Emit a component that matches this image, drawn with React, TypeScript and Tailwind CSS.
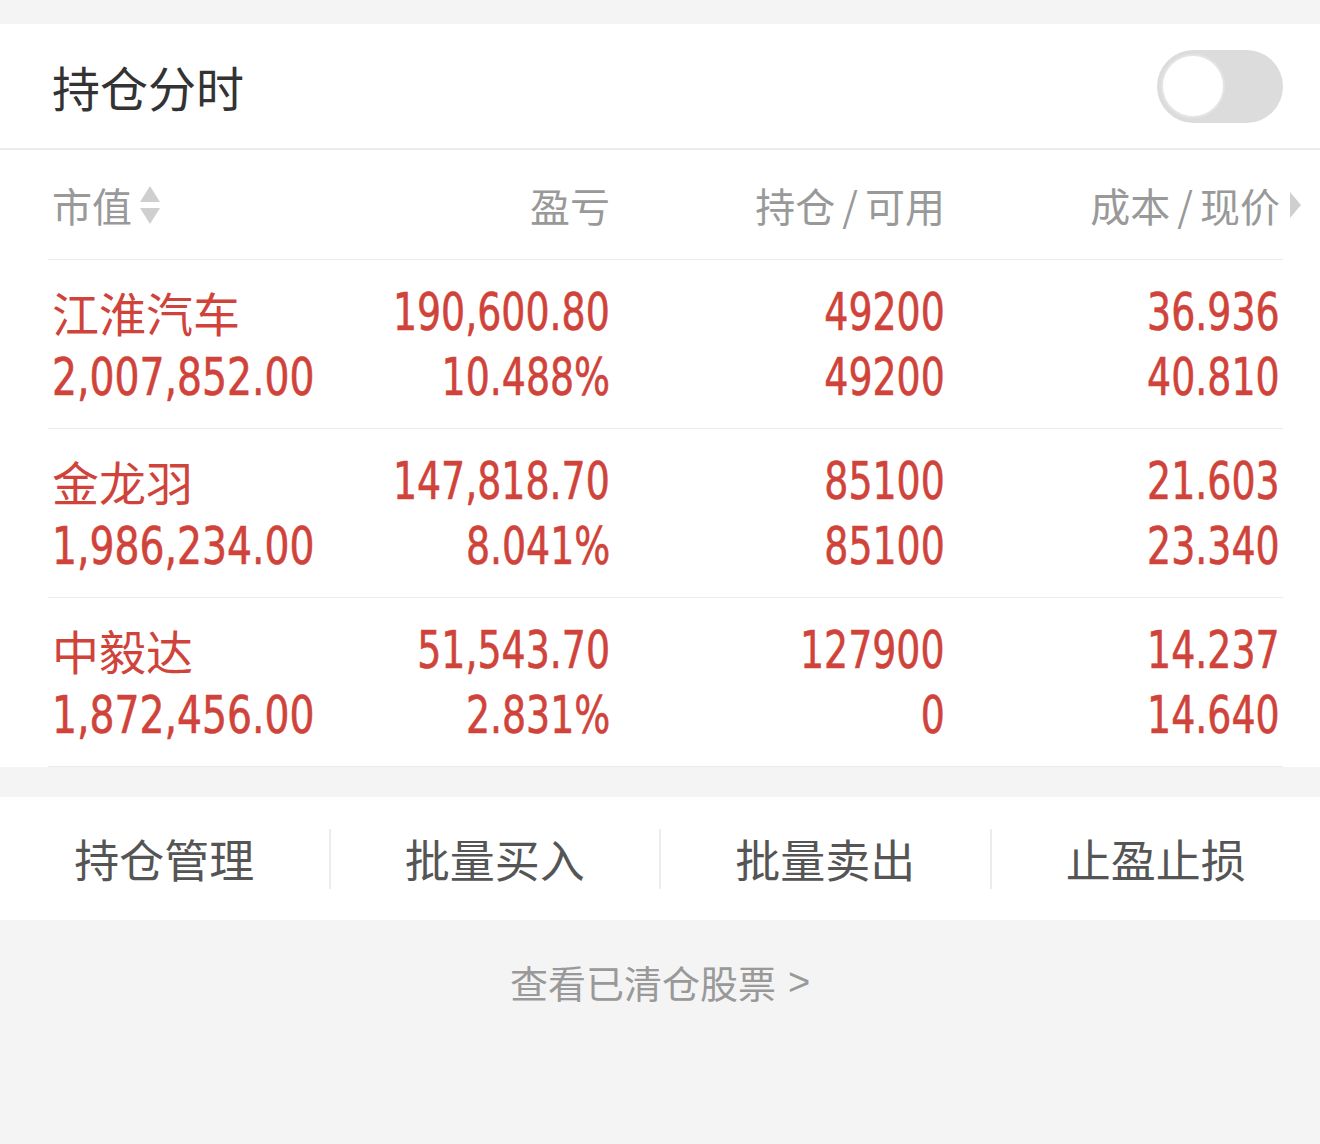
import React from 'react';

const cn = '"Noto Sans CJK SC", "Noto Sans", sans-serif';
const num = '"DejaVu Sans Condensed", "DejaVu Sans", sans-serif';

const rows = [
  { name: '江淮汽车', value: '2,007,852.00', pnl: '190,600.80', pct: '10.488%', hold: '49200', avail: '49200', cost: '36.936', price: '40.810' },
  { name: '金龙羽', value: '1,986,234.00', pnl: '147,818.70', pct: '8.041%', hold: '85100', avail: '85100', cost: '21.603', price: '23.340' },
  { name: '中毅达', value: '1,872,456.00', pnl: '51,543.70', pct: '2.831%', hold: '127900', avail: '0', cost: '14.237', price: '14.640' },
];

const actions = ['持仓管理', '批量买入', '批量卖出', '止盈止损'];

// condensed digits, like the DIN face in the app
function Num({ children, right, wide }: { children: React.ReactNode; right?: boolean; wide?: boolean }) {
  return (
    <span
      className={`inline-block whitespace-nowrap text-[52px] leading-none ${wide ? 'scale-x-[0.84]' : 'scale-x-[0.81]'} ${right ? 'origin-right' : 'origin-left'}`}
      style={{ fontFamily: num, WebkitTextStroke: '0.6px currentColor' }}
    >
      {children}
    </span>
  );
}

export default function App() {
  return (
    <div className="w-[1320px] h-[1144px] bg-[#f4f4f4] pt-[24px]" style={{ fontFamily: cn }}>
      {/* Header */}
      <div className="bg-white h-[126px] flex items-center justify-between pl-[52px] pr-[37px] border-b-2 border-[#ebebeb]">
        <span className="text-[48px] leading-none text-[#333]">持仓分时</span>
        <div className="w-[126px] h-[73px] rounded-full bg-[#dcdcdc] flex items-center pl-[4px]">
          <div className="w-[64px] h-[64px] rounded-full bg-white border-2 border-[#e4e4e4]" />
        </div>
      </div>

      {/* Table */}
      <div className="bg-white">
        <div className="ml-[48px] mr-[37px]">
          <div className="grid grid-cols-[223px_335px_335px_335px] items-center h-[110px] pl-[4px] pr-[3px] border-b border-[#ececec] text-[40px] text-[#999] leading-none">
            <div className="flex items-center gap-[6px]">
              <span>市值</span>
              <svg width="24" height="42" viewBox="0 0 24 42">
                <polygon points="12,2 22,18 2,18" fill="#cfcfcf" />
                <polygon points="2,24 22,24 12,40" fill="#cfcfcf" />
              </svg>
            </div>
            <div className="text-right">盈亏</div>
            <div className="text-right">持仓<span className="mx-[7px]">/</span>可用</div>
            <div className="relative text-right">
              成本<span className="mx-[7px]">/</span>现价
              <svg className="absolute right-[-21px] top-1/2 -translate-y-1/2" width="11" height="26" viewBox="0 0 11 26">
                <polygon points="0,0 11,13 0,26" fill="#cfcfcf" />
              </svg>
            </div>
          </div>
          {rows.map((r) => (
            <div key={r.name} className="grid grid-cols-[223px_335px_335px_335px] py-[19px] pl-[4px] pr-[1px] border-b border-[#ececec] text-[#d0433a]">
              <div className="flex flex-col">
                <span className="h-[65px] flex items-center text-[47px] leading-none whitespace-nowrap">{r.name}</span>
                <span className="h-[65px] flex items-center"><Num wide>{r.value}</Num></span>
              </div>
              {[[r.pnl, r.pct], [r.hold, r.avail], [r.cost, r.price]].map(([a, b], i) => (
                <div key={i} className="flex flex-col items-end">
                  <span className="h-[65px] flex items-center"><Num right>{a}</Num></span>
                  <span className="h-[65px] flex items-center"><Num right>{b}</Num></span>
                </div>
              ))}
            </div>
          ))}
        </div>
      </div>

      {/* Actions */}
      <div className="mt-[30px] bg-white h-[123px] flex items-center">
        {actions.map((a, i) => (
          <div key={a} className={`flex-1 h-[60px] flex items-center justify-center text-[45px] text-[#555] leading-none ${i < 3 ? 'border-r-2 border-[#ececec]' : ''}`}>
            {a}
          </div>
        ))}
      </div>

      {/* Cleared stocks link */}
      <div className="flex justify-center pt-[43px] text-[38px] text-[#999] leading-none">
        查看已清仓股票 <span className="ml-[12px]" style={{ fontFamily: '"Liberation Sans", sans-serif' }}>&gt;</span>
      </div>
    </div>
  );
}
